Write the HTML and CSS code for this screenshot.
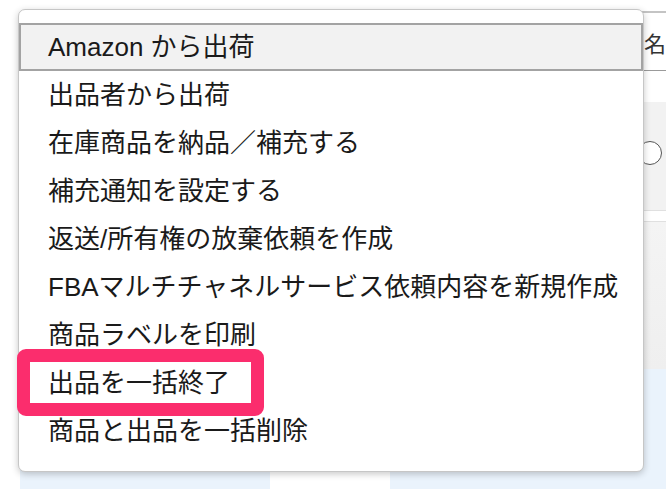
FILE: index.html
```html
<!DOCTYPE html>
<html lang="ja">
<head>
  <meta charset="UTF-8">
  <meta name="viewport" content="width=device-width, initial-scale=1.0">
  <title>在庫管理 - アクション</title>
  <link rel="stylesheet" href="styles.css">
</head>
<body>
  <div class="page">
    <div class="inventory-table">
      <div class="thead"><span class="th-label">名</span></div>
      <div class="row row-blank"></div>
      <div class="row row-item"><span class="radio"></span></div>
      <div class="row row-gap"></div>
      <div class="row row-detail"></div>
      <div class="row row-foot"><span class="foot-tile"></span></div>
    </div>

    <ul class="action-menu">
      <li class="menu-item active">Amazon から出荷</li>
      <li class="menu-item">出品者から出荷</li>
      <li class="menu-item">在庫商品を納品／補充する</li>
      <li class="menu-item">補充通知を設定する</li>
      <li class="menu-item">返送/所有権の放棄依頼を作成</li>
      <li class="menu-item">FBAマルチチャネルサービス依頼内容を新規作成</li>
      <li class="menu-item">商品ラベルを印刷</li>
      <li class="menu-item marked">出品を一括終了<span class="callout"></span></li>
      <li class="menu-item">商品と出品を一括削除</li>
    </ul>
  </div>
</body>
</html>
```

FILE: styles.css
```css
:root {
  --text: #1a1a1a;
  --line: #c6c6c6;
  --row-gray: #f2f2f2;
  --row-blue: #eaf3fc;
  --pink: #fb2d6d;
}

html, body {
  margin: 0;
  background: #fff;
  overflow: hidden;
}

body {
  font-family: "Liberation Sans", "Noto Sans CJK JP", sans-serif;
  color: var(--text);
}

.page {
  position: relative;
  width: 666px;
  height: 490px;
}

/* background table, mostly hidden behind the menu */
.inventory-table {
  margin-left: 20px;
  padding-top: 11px;
}

.thead {
  display: flex;
  align-items: center;
  height: 57px;
  border-top: 2px solid #c4c4c4;
  border-bottom: 1px solid #9a9a9a;
  padding-left: 624px;
  font-size: 22px;
  color: #333;
  white-space: nowrap;
}

.row-blank {
  height: 31px;
}

.row-item {
  height: 108px;
  background: var(--row-gray);
  padding-left: 618px;
  padding-top: 39px;
  box-sizing: border-box;
}

.radio {
  display: block;
  width: 24px;
  height: 24px;
  border: 1.5px solid #555;
  border-radius: 50%;
  box-sizing: border-box;
  background: #fff;
}

.row-gap {
  height: 10px;
  border-top: 1px solid #e0e0e0;
  border-bottom: 1px solid #e0e0e0;
}

.row-detail {
  height: 147px;
  background: linear-gradient(#f4f4f4, #efefef);
}

.row-foot {
  height: 120px;
  background: var(--row-blue);
  padding-left: 250px;
  padding-top: 103px;
  box-sizing: border-box;
}

.foot-tile {
  display: block;
  width: 120px;
  height: 17px;
  background: #fff;
}

/* dropdown menu */
.action-menu {
  position: absolute;
  left: 18px;
  top: 9px;
  width: 626px;
  box-sizing: border-box;
  margin: 0;
  padding: 13px 0 16px;
  list-style: none;
  background: #fff;
  border: 1px solid var(--line);
  border-radius: 7px;
  box-shadow: 0 2px 7px rgba(0, 0, 0, 0.22);
}

.menu-item {
  position: relative;
  height: 48px;
  line-height: 48px;
  padding-left: 29px;
  font-size: 26px;
  white-space: nowrap;
}

.menu-item.active {
  background: var(--row-gray);
  border: 2px solid #a3a3a3;
  box-sizing: border-box;
  line-height: 44px;
  padding-left: 27px;
}

.callout {
  position: absolute;
  left: -2px;
  top: -10px;
  width: 247px;
  height: 67px;
  box-sizing: border-box;
  border: 13px solid var(--pink);
  border-radius: 9px;
}
```
